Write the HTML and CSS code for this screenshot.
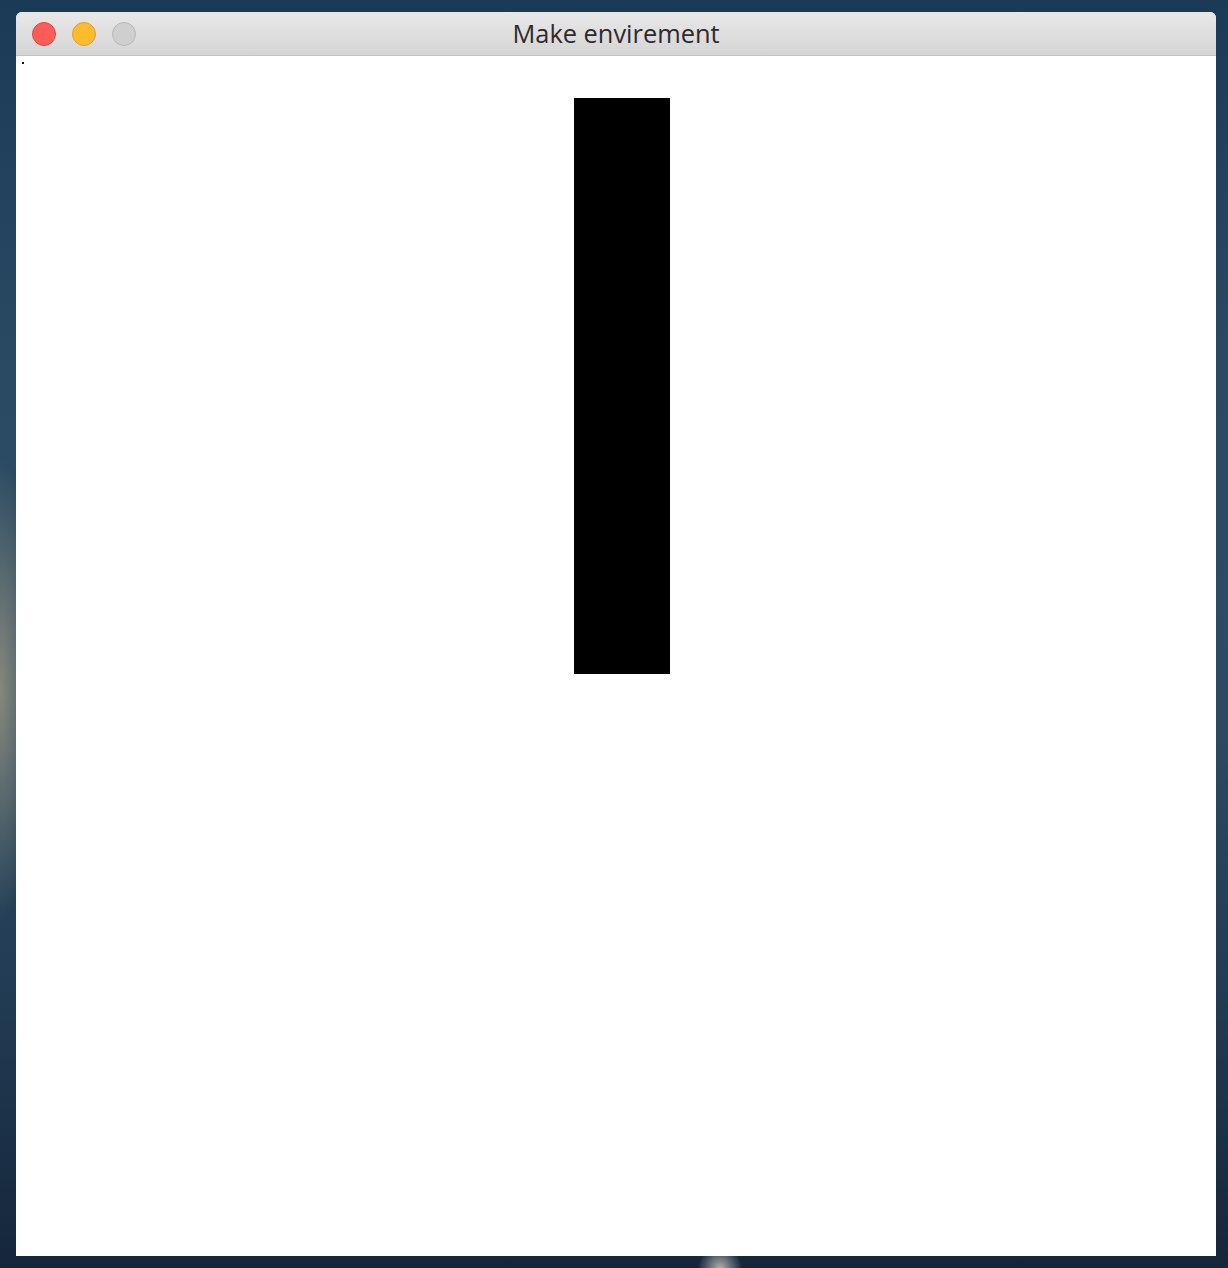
FILE: index.html
```html
<!DOCTYPE html>
<html>
<head>
<meta charset="utf-8">
<link rel="stylesheet" href="styles.css">
</head>
<body>
<div class="desktop">
  <div class="window">
    <div class="titlebar">
      <div class="lights">
        <span class="light close"></span>
        <span class="light min"></span>
        <span class="light max"></span>
      </div>
      <div class="title">Make envirement</div>
    </div>
    <div class="content">
      <span class="dot"></span>
      <div class="bar"></div>
    </div>
  </div>
</div>
</body>
</html>
```
FILE: styles.css
```css
html, body {
  margin: 0;
  padding: 0;
}
body {
  width: 1228px;
  height: 1268px;
  overflow: hidden;
}
.desktop {
  width: 1228px;
  height: 1268px;
  box-sizing: border-box;
  padding: 12px 12px 12px 16px;
  background:
    radial-gradient(ellipse 40px 230px at 0px 690px, rgba(140,140,125,0.95), rgba(140,140,125,0) 100%),
    radial-gradient(ellipse 22px 22px at 720px 1268px, rgba(200,200,190,0.85), rgba(200,200,190,0) 100%),
    linear-gradient(180deg, #1b3a56 0%, #2a4a64 30%, #2c4b63 55%, #203a52 80%, #15263a 100%);
}
.window {
  width: 1200px;
  height: 1244px;
  display: flex;
  flex-direction: column;
  border-radius: 6px 6px 0 0;
  overflow: hidden;
  background: #ffffff;
}
.titlebar {
  height: 43px;
  flex: 0 0 43px;
  border-bottom: 1px solid #c4c2c4;
  background: linear-gradient(180deg, #e9e8e9 0%, #d6d5d6 100%);
  display: flex;
  align-items: center;
  position: relative;
}
.lights {
  display: flex;
  gap: 16px;
  padding-left: 16px;
  padding-top: 1px;
}
.light {
  width: 24px;
  height: 24px;
  border-radius: 50%;
  box-sizing: border-box;
}
.close { background: #fd5c57; border: 1px solid #e2463f; }
.min { background: #fdbb2e; border: 1px solid #e0a028; }
.max { background: #d0cfd0; border: 1px solid #b8b7b8; }
.title {
  position: absolute;
  left: 0;
  right: 0;
  top: 0;
  bottom: 0;
  display: flex;
  align-items: center;
  justify-content: center;
  font-family: "Open Sans", "Liberation Sans", sans-serif;
  font-size: 25.4px;
  color: #2e2a2c;
  padding-bottom: 1px;
}
.content {
  flex: 1;
  position: relative;
  padding-top: 42px;
}
.dot {
  position: absolute;
  left: 6px;
  top: 6px;
  width: 2px;
  height: 2px;
  background: #000;
}
.bar {
  margin-left: 558px;
  width: 96px;
  height: 576px;
  background: #000;
}
```
